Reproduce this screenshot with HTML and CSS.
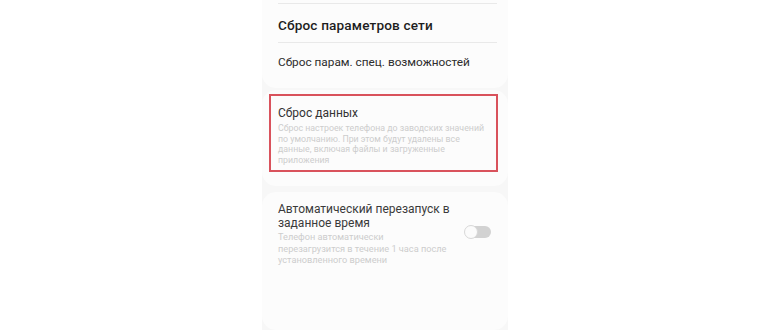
FILE: index.html
```
<!DOCTYPE html>
<html lang="ru">
<head>
<meta charset="utf-8">
<link rel="stylesheet" href="styles.css">
</head>
<body>
<div class="page">
  <div class="phone">
    <div class="card card-top">
      <div class="divider"></div>
      <div class="item item-bold">Сброс параметров сети</div>
      <div class="divider"></div>
      <div class="item">Сброс парам. спец. возможностей</div>
    </div>
    <div class="card card-reset">
      <div class="highlight">
        <div class="title">Сброс данных</div>
        <div class="desc">Сброс настроек телефона до заводских значений по умолчанию. При этом будут удалены все данные, включая файлы и загруженные приложения</div>
      </div>
    </div>
    <div class="card card-auto">
      <div class="auto-row">
        <div class="auto-text">
          <div class="title-big">Автоматический перезапуск в заданное время</div>
          <div class="desc desc-auto">Телефон автоматически<br>перезагрузится в течение 1 часа после установленного времени</div>
        </div>
        <div class="toggle"><span class="knob"></span></div>
      </div>
    </div>
  </div>
</div>
</body>
</html>
```
FILE: styles.css
```
html, body {
  margin: 0;
  padding: 0;
  background: #ffffff;
}
.page {
  width: 770px;
  height: 330px;
  display: flex;
  justify-content: center;
  overflow: hidden;
  font-family: Roboto, "Noto Sans", sans-serif;
}
.phone {
  width: 246px;
  height: 330px;
  background: #f7f7f7;
  display: flex;
  flex-direction: column;
  gap: 2px;
}
.card {
  background: #fcfcfc;
  border-radius: 0 0 14px 14px;
}
.card-top {
  padding: 3px 11px 0 16px;
  height: 85px;
  display: flex;
  flex-direction: column;
}
.divider {
  height: 1px;
  background: #e9e9e9;
}
.item {
  font-size: 11.8px;
  color: #2c2c2c;
  height: 38px;
  line-height: 38px;
}
.item-bold {
  font-size: 13.6px;
  font-weight: 500;
  color: #1e1e1e;
  letter-spacing: 0.15px;
  line-height: 42px;
}
.card-reset {
  border-radius: 14px;
  padding: 4px 10px 0 7px;
  height: 92px;
}
.highlight {
  border: 2px solid #d9525c;
  padding: 8px 8px 0 7px;
  height: 66px;
}
.title {
  font-size: 12px;
  color: #333;
  line-height: 19px;
}
.desc {
  font-size: 8.8px;
  line-height: 10.7px;
  color: #cdcdcd;
}
.card-auto {
  border-radius: 14px;
  flex: 1;
  margin-top: 4px;
  padding: 11px 17px 0 16px;
}
.auto-row {
  display: flex;
  align-items: flex-start;
}
.auto-text {
  width: 180px;
}
.title-big {
  font-size: 12px;
  line-height: 13.5px;
  color: #3a3a3a;
}
.desc-auto {
  font-size: 9.2px;
  line-height: 11.5px;
  margin-top: 1px;
}
.toggle {
  margin-left: auto;
  margin-top: 23px;
  width: 26px;
  height: 12px;
  border-radius: 6px;
  background: #d2d2d2;
  position: relative;
}
.knob {
  position: absolute;
  left: -1px;
  top: -1px;
  width: 12px;
  height: 12px;
  border-radius: 50%;
  background: #fbfbfb;
  border: 1px solid #d8d8d8;
}
```
